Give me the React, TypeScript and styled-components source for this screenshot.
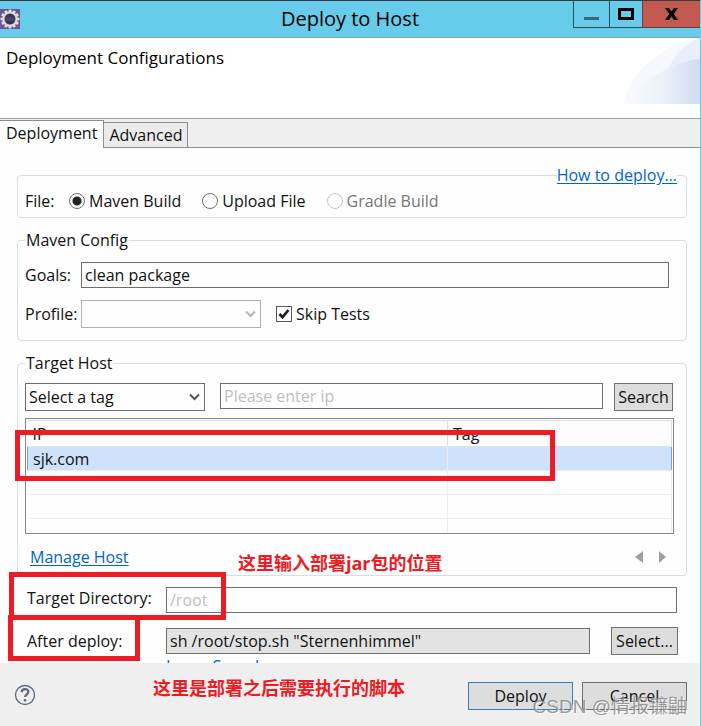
import React from "react";
import styled, { createGlobalStyle, css } from "styled-components";

const Global = createGlobalStyle`
  * { box-sizing: border-box; }
  body { margin: 0; background: #fefefe; }
  body, button, input, select {
    font-family: "Open Sans", "Noto Sans CJK SC", sans-serif;
    font-size: 16px;
    line-height: 22px;
    color: #111;
  }
`;

const Window = styled.div`
  position: relative;
  display: flex;
  flex-direction: column;
  min-height: 100vh;
  overflow: hidden;
  background: #fefefe;
  border-right: 1px solid #67cbea;
`;

const TitleBar = styled.header`
  display: grid;
  grid-template-columns: 1fr auto 1fr;
  align-items: start;
  height: 38px;
  background: #67cbea;
  border-top: 1px solid #353a40;
  border-bottom: 1px solid #7fa5b5;
`;
const AppIcon = styled.svg`
  display: block;
  width: 20px;
  height: 20px;
  margin-top: 8px;
`;
const Title = styled.h1`
  margin: 0;
  font-size: 20px;
  font-weight: 400;
  line-height: 36px;
  color: #000;
`;
const WindowControls = styled.div`
  display: flex;
  justify-content: flex-end;
  height: 27px;
`;
const WindowButton = styled.button<{ $width: number; $close?: boolean }>`
  display: flex;
  align-items: center;
  justify-content: center;
  width: ${(p) => p.$width}px;
  padding: 0;
  background: ${(p) => (p.$close ? "#c35a50" : "transparent")};
  border: 1px solid ${(p) => (p.$close ? "#6d3c3c" : "#2c4d59")};
  border-top: 0;
  border-right: 0;
`;

const Banner = styled.section`
  display: flex;
  justify-content: space-between;
  height: 81px;
  background: #fff;
  border-bottom: 1px solid #a0a0a0;
`;
const BannerTitle = styled.h2`
  margin: 0;
  padding: 9px 6px;
  font-size: 17px;
  font-weight: 400;
  line-height: 22px;
  color: #000;
`;
const BannerArt = styled.svg`
  display: block;
  width: 76px;
  height: 66px;
`;

const TabBar = styled.nav`
  display: flex;
  align-items: flex-end;
  height: 29px;
  background: #efefef;
  border-bottom: 1px solid #8c8c96;
`;
const Tab = styled.button<{ $active?: boolean }>`
  height: 25px;
  padding: 0 5px;
  background: #ebebeb;
  border: 1px solid #8c8c96;
  border-left: 0;
  border-bottom: 0;
  ${(p) =>
    p.$active &&
    css`
      height: 28px;
      margin-bottom: -1px;
      padding: 0 6px 3px;
      background: #fefefe;
    `}
`;

const Content = styled.main`
  flex: 1;
  display: flex;
  flex-direction: column;
  padding: 16px 13px 0 17px;
`;
const Group = styled.fieldset`
  min-width: 0;
  margin: 0 0 11px;
  padding: 0 13px 0 7px;
  border: 1px solid #d5dfe5;
  border-radius: 4px;
`;
const Legend = styled.legend<{ $right?: boolean }>`
  margin-left: ${(p) => (p.$right ? "auto" : "0")};
  margin-right: ${(p) => (p.$right ? "-4px" : "0")};
  padding: 0 ${(p) => (p.$right ? 0 : 1)}px;
`;
const Link = styled.a`
  color: #0066cc;
  text-underline-offset: 2px;
`;
const Line = styled.div<{ $top?: number; $bottom?: number; $right?: number; $align?: string }>`
  display: flex;
  align-items: ${(p) => p.$align ?? "center"};
  margin-top: ${(p) => p.$top ?? 0}px;
  margin-bottom: ${(p) => p.$bottom ?? 0}px;
  padding-right: ${(p) => p.$right ?? 0}px;
`;
const SearchLine = styled(Line)`
  gap: 11px;
`;
const Label = styled.label<{ $width: number }>`
  flex: none;
  width: ${(p) => p.$width}px;
`;
const Choice = styled.label<{ $disabled?: boolean }>`
  display: flex;
  align-items: center;
  gap: 4px;
  margin-right: 21px;
  color: ${(p) => (p.$disabled ? "#777" : "inherit")};
`;
const Radio = styled.input.attrs({ type: "radio" })`
  appearance: none;
  width: 16px;
  height: 16px;
  margin: 0;
  border: 1px solid #707070;
  border-radius: 50%;
  background: #fff;
  &:checked { background: radial-gradient(circle, #222 0 4px, #fff 5px); }
  &:disabled { border-color: #c3c3c3; }
`;
const CheckWrap = styled.span`
  display: grid;
  width: 16px;
  height: 16px;
  & > * { grid-area: 1 / 1; }
  svg { pointer-events: none; }
`;
const Check = styled.input.attrs({ type: "checkbox" })`
  appearance: none;
  width: 16px;
  height: 16px;
  margin: 0;
  border: 1px solid #555;
  background: #fff;
  & + svg { visibility: hidden; }
  &:checked + svg { visibility: visible; }
`;
const TextInput = styled.input`
  flex: 1;
  min-width: 0;
  height: 26px;
  padding: 0 3px;
  background: #fefefe;
  border: 1px solid #6e6e6e;
  border-radius: 0;
  &::placeholder { color: #bfbfbf; opacity: 1; }
  &:read-only { background: #e3e3e3; }
`;
const SelectWrap = styled.div<{ $gap: number }>`
  display: grid;
  flex: none;
  width: 180px;
  margin-right: ${(p) => p.$gap}px;
  align-items: center;
  & > * { grid-area: 1 / 1; }
  svg { justify-self: end; margin-right: 5px; pointer-events: none; }
`;
const Select = styled.select`
  appearance: none;
  width: 100%;
  height: 28px;
  padding: 0 20px 0 3px;
  background: #fefefe;
  border: 1px solid #6e6e6e;
  border-radius: 0;
  opacity: 1;
  &:disabled { border-color: #adb2b5; }
`;
const Button = styled.button<{ $width: number; $primary?: boolean }>`
  flex: none;
  width: ${(p) => p.$width}px;
  height: 28px;
  padding: 0;
  white-space: nowrap;
  background: #dddddd;
  border: 1px solid ${(p) => (p.$primary ? "#3c7fb1" : "#707070")};
`;

const TableFrame = styled.div`
  margin-top: 7px;
  margin-right: -1px;
  padding: 1px;
  height: 116px;
  overflow: hidden;
  border: 1px solid #828790;
`;
const HostTable = styled.table`
  width: 100%;
  table-layout: fixed;
  border-collapse: collapse;
  th, td {
    height: 24px;
    padding: 0 5px;
    font-weight: 400;
    text-align: left;
    line-height: 22px;
    border: 1px solid #ededed;
    border-left-width: 0;
  }
  th:last-child { width: 224px; }
  th {
    height: 26px;
    background: #fcfcfc;
    border-color: #e0e0e0;
  }
`;
const HostRow = styled.tr<{ $selected?: boolean }>`
  ${(p) =>
    p.$selected &&
    css`
      background: #cfe2fc;
      td { border-top-color: #7da2ce; }
      td:first-child { border-left: 1px solid #7da2ce; }
      td:last-child { border-right-color: #7da2ce; }
    `}
`;
const HostActions = styled(Line)`
  justify-content: space-between;
  padding: 0 7px 0 5px;
`;
const Pager = styled.div`
  display: flex;
  gap: 16px;
`;
const PagerButton = styled.button`
  display: flex;
  padding: 0;
  border: 0;
  background: none;
`;

const Settings = styled.section`
  display: flex;
  flex-direction: column;
  padding: 0 10px;
`;
const SettingsLine = styled(Line)`
  gap: 21px;
  margin-right: -1px;
`;
const Field = styled.div`
  display: flex;
  flex: 1;
  min-width: 0;
  align-items: center;
`;
const ClippedLink = styled.div`
  height: 8px;
  padding-left: 139px;
  overflow: hidden;
`;

const Footer = styled.footer`
  display: flex;
  align-items: flex-start;
  gap: 9px;
  height: 63px;
  padding: 19px 13px 0 14px;
  background: #efefef;
`;
const HelpButton = styled.button`
  display: flex;
  margin: 2px auto 0 0;
  padding: 0;
  border: 0;
  background: none;
`;

const RedBox = styled.div<{ $x: number; $y: number; $w: number; $h: number }>`
  position: absolute;
  left: ${(p) => p.$x}px;
  top: ${(p) => p.$y}px;
  width: ${(p) => p.$w}px;
  height: ${(p) => p.$h}px;
  border: 5px solid #ed1c24;
  pointer-events: none;
`;
const RedNote = styled.p<{ $x: number; $y: number }>`
  position: absolute;
  left: ${(p) => p.$x}px;
  top: ${(p) => p.$y}px;
  margin: 0;
  font-size: 18px;
  font-weight: 700;
  line-height: 26px;
  white-space: nowrap;
  color: #ed1c24;
  pointer-events: none;
`;
const Watermark = styled.p`
  position: absolute;
  right: 13px;
  bottom: 5px;
  margin: 0;
  font-family: "Liberation Sans", "Noto Sans CJK SC", sans-serif;
  font-size: 19px;
  line-height: 28px;
  white-space: nowrap;
  color: rgba(125, 125, 125, 0.75);
  text-shadow: 1px 1px 0 rgba(255, 255, 255, 0.7);
  pointer-events: none;
`;

const Chevron = ({ color }: { color: string }) => (
  <svg width="11" height="8" viewBox="0 0 11 8" fill="none" stroke={color} strokeWidth="2">
    <path d="M1 1.5 5.5 6 10 1.5" />
  </svg>
);

const teeth = Array.from({ length: 12 }, (_, i) => i * 30);

export default function App() {
  return (
    <>
      <Global />
      <Window>
        <TitleBar>
          <AppIcon viewBox="0 0 20 20">
            <rect width="20" height="20" fill="#6b559a" />
            {teeth.map((a) => (
              <rect key={a} x="8.6" y="0.6" width="2.8" height="4" fill="#e4e0dc" transform={`rotate(${a} 10 10)`} />
            ))}
            <circle cx="10" cy="10" r="6.6" fill="#393457" stroke="#dedbd6" strokeWidth="2.2" />
            <path d="M5 9h10M5 11h10" stroke="#5b5280" />
          </AppIcon>
          <Title>Deploy to Host</Title>
          <WindowControls>
            <WindowButton $width={36} aria-label="Minimize">
              <svg width="15" height="14"><rect y="10" width="15" height="3" fill="#35697c" /></svg>
            </WindowButton>
            <WindowButton $width={33} aria-label="Maximize">
              <svg width="16" height="12"><rect x="1.5" y="1.5" width="13" height="9" fill="none" stroke="#000" strokeWidth="3" /></svg>
            </WindowButton>
            <WindowButton $width={58} $close aria-label="Close">
              <svg width="13" height="12" viewBox="0 0 13 12"><path d="M0 0h4l2.5 3.5L9 0h4L8.7 6 13 12H9L6.5 8.5 4 12H0l4.3-6z" fill="#000" /></svg>
            </WindowButton>
          </WindowControls>
        </TitleBar>

        <Banner>
          <BannerTitle>Deployment Configurations</BannerTitle>
          <BannerArt viewBox="0 0 76 66" preserveAspectRatio="none">
            <defs>
              <linearGradient id="fade" x1="0" x2="1">
                <stop offset="0" stopColor="#fafbff" />
                <stop offset="0.5" stopColor="#ecf1fa" />
                <stop offset="1" stopColor="#d0dcf2" />
              </linearGradient>
            </defs>
            <path d="M0 66C2 38 42 2 76 0V66Z" fill="#f5f8fe" />
            <path d="M45 30C50 16 62 5 76 0V30Z" fill="#e8eefa" />
            <path d="M0 66C12 46 48 23 76 21V66Z" fill="url(#fade)" />
          </BannerArt>
        </Banner>

        <TabBar>
          <Tab $active>Deployment</Tab>
          <Tab>Advanced</Tab>
        </TabBar>

        <Content>
          <Group>
            <Legend $right><Link href="#how">How to deploy...</Link></Legend>
            <Line $top={4} $bottom={5}>
              <Label as="span" $width={44}>File:</Label>
              <Choice><Radio name="file" defaultChecked />Maven Build</Choice>
              <Choice><Radio name="file" />Upload File</Choice>
              <Choice $disabled><Radio name="file" disabled />Gradle Build</Choice>
            </Line>
          </Group>

          <Group>
            <Legend>Maven Config</Legend>
            <Line $top={11} $bottom={12} $right={4}>
              <Label htmlFor="goals" $width={56}>Goals:</Label>
              <TextInput id="goals" defaultValue="clean package" />
            </Line>
            <Line $bottom={12}>
              <Label htmlFor="profile" $width={56}>Profile:</Label>
              <SelectWrap $gap={15}>
                <Select id="profile" disabled />
                <Chevron color="#b8b8b8" />
              </SelectWrap>
              <Choice>
                <CheckWrap>
                  <Check defaultChecked />
                  <svg width="16" height="16" viewBox="0 0 16 16"><path d="M3.5 8 6.5 11.2 12.5 4" fill="none" stroke="#1c1c1c" strokeWidth="2.6" /></svg>
                </CheckWrap>
                Skip Tests
              </Choice>
            </Line>
          </Group>

          <Group>
            <Legend>Target Host</Legend>
            <SearchLine $top={9} $align="flex-start">
              <SelectWrap $gap={4}>
                <Select aria-label="Tag"><option>Select a tag</option></Select>
                <Chevron color="#555" />
              </SelectWrap>
              <TextInput aria-label="IP" placeholder="Please enter ip" />
              <Button $width={59}>Search</Button>
            </SearchLine>
            <TableFrame>
              <HostTable>
                <thead><tr><th>IP</th><th>Tag</th></tr></thead>
                <tbody>
                  <HostRow $selected><td>sjk.com</td><td /></HostRow>
                  <HostRow><td /><td /></HostRow>
                  <HostRow><td /><td /></HostRow>
                  <HostRow><td /><td /></HostRow>
                </tbody>
              </HostTable>
            </TableFrame>
            <HostActions $top={12} $bottom={7}>
              <Link href="#manage">Manage Host</Link>
              <Pager>
                <PagerButton aria-label="Previous"><svg width="8" height="12"><path d="M8 0v12L0 6z" fill="#a0a0a0" /></svg></PagerButton>
                <PagerButton aria-label="Next"><svg width="7" height="12"><path d="M0 0v12L7 6z" fill="#a0a0a0" /></svg></PagerButton>
              </Pager>
            </HostActions>
          </Group>

          <Settings>
            <Line $bottom={14} $align="flex-start">
              <Label htmlFor="dir" $width={139}>Target Directory:</Label>
              <TextInput id="dir" placeholder="/root" />
            </Line>
            <SettingsLine>
              <Field>
                <Label htmlFor="after" $width={139}>After deploy:</Label>
                <TextInput id="after" readOnly defaultValue={'sh /root/stop.sh "Sternenhimmel"'} />
              </Field>
              <Button $width={67}>Select...</Button>
            </SettingsLine>
            <ClippedLink><Link href="#learn">Learn Sample</Link></ClippedLink>
          </Settings>
        </Content>

        <Footer>
          <HelpButton aria-label="Help">
            <svg width="22" height="22" viewBox="0 0 22 22" fill="none" stroke="#5c6b84">
              <circle cx="11" cy="11" r="9.5" strokeWidth="1.3" />
              <path d="M7.7 8.3C7.9 4 14.5 4.2 14.3 8c-.1 2.4-3.2 2.4-3.2 5" strokeWidth="2.3" />
              <path d="M11 15v2.5" strokeWidth="2.5" />
            </svg>
          </HelpButton>
          <Button $width={105} $primary>Deploy</Button>
          <Button $width={105}>Cancel</Button>
        </Footer>

        <RedBox $x={15} $y={430} $w={540} $h={51} />
        <RedBox $x={9} $y={572} $w={217} $h={48} />
        <RedBox $x={8} $y={615} $w={132} $h={46} />
        <RedNote $x={238} $y={550}>这里输入部署jar包的位置</RedNote>
        <RedNote $x={153} $y={675}>这里是部署之后需要执行的脚本</RedNote>
        <Watermark>CSDN @情报镰鼬</Watermark>
      </Window>
    </>
  );
}
